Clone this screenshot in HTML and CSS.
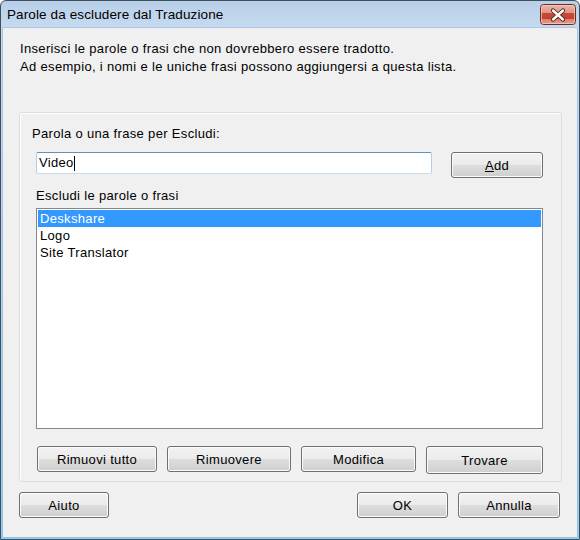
FILE: index.html
```html
<!DOCTYPE html>
<html>
<head>
<meta charset="utf-8">
<link rel="stylesheet" href="styles.css">
</head>
<body>
<div class="window">
  <div class="titlebar">
    <div class="title">Parole da escludere dal Traduzione</div>
    <div class="close">
      <svg width="36" height="21" viewBox="0 0 36 21">
        <defs>
          <linearGradient id="cg" x1="0" y1="0" x2="0" y2="1">
            <stop offset="0" stop-color="#ecb8ac"/>
            <stop offset="0.42" stop-color="#dc9483"/>
            <stop offset="0.45" stop-color="#c84a34"/>
            <stop offset="0.7" stop-color="#c5432e"/>
            <stop offset="0.75" stop-color="#d9826f"/>
            <stop offset="1" stop-color="#e6a393"/>
          </linearGradient>
        </defs>
        <rect x="0.5" y="0.5" width="35" height="20" rx="3" fill="url(#cg)" stroke="#6e2b22"/>
        <rect x="1.5" y="1.5" width="33" height="18" rx="2" fill="none" stroke="#f6d0c6" stroke-opacity="0.7"/>
        <path d="M13 6.5 L23 15.5 M23 6.5 L13 15.5" stroke="#4a231c" stroke-width="4.2" stroke-linecap="round"/>
        <path d="M13 6.5 L23 15.5 M23 6.5 L13 15.5" stroke="#ffffff" stroke-width="2.4" stroke-linecap="round"/>
      </svg>
    </div>
  </div>
  <div class="client">
    <div class="intro">
      <div>Inserisci le parole o frasi che non dovrebbero essere tradotto.</div>
      <div>Ad esempio, i nomi e le uniche frasi possono aggiungersi a questa lista.</div>
    </div>
    <div class="group">
      <div class="label first">Parola o una frase per Escludi:</div>
      <div class="entry-row">
        <div class="textbox">Video<span class="caret"></span></div>
        <div class="btn add"><span class="ul">A</span>dd</div>
      </div>
      <div class="label second">Escludi le parole o frasi</div>
      <div class="listbox">
        <div class="item selected">Deskshare</div>
        <div class="item">Logo</div>
        <div class="item">Site Translator</div>
      </div>
      <div class="btn-row">
        <div class="btn w-rt">Rimuovi tutto</div>
        <div class="btn w-rm">Rimuovere</div>
        <div class="btn w-mo">Modifica</div>
        <div class="btn w-tr">Trovare</div>
      </div>
    </div>
    <div class="footer">
      <div class="btn w-aiuto">Aiuto</div>
      <div class="spacer"></div>
      <div class="btn w-ok">OK</div>
      <div class="btn w-ann">Annulla</div>
    </div>
  </div>
</div>
</body>
</html>
```

FILE: styles.css
```css
html, body {
  margin: 0;
  padding: 0;
  background: #ffffff;
}

body {
  font-family: "Liberation Sans", Arial, sans-serif;
  font-size: 13px;
  letter-spacing: 0.33px;
  color: #000;
}

.window {
  width: 580px;
  height: 540px;
  box-sizing: border-box;
  border: 1px solid #3f4f60;
  border-radius: 6px 6px 0 0;
  padding: 0 2px 2px 2px;
  display: flex;
  flex-direction: column;
  background: linear-gradient(to bottom, #b8cfe8 0px, #c6dbf0 27px, #b9d6ef 40%, #8fd0f0 100%);
}

.titlebar {
  height: 27px;
  display: flex;
  align-items: flex-start;
}

.title {
  padding-left: 4px;
  padding-top: 6px;
  font-size: 13.5px;
  letter-spacing: 0.12px;
  line-height: 16px;
  color: #000;
  flex: 1;
}

.close {
  margin-top: 3px;
  margin-right: 1px;
  height: 21px;
}

.close svg {
  display: block;
}

.client {
  flex: 1;
  background: #f0f0f0;
  display: flex;
  flex-direction: column;
  box-shadow: 0 0 0 0.5px #8fb4d6;
}

.intro {
  margin: 12px 0 0 17px;
  line-height: 18px;
}

.group {
  margin: 36px 0 0 16px;
  width: 543px;
  height: 370px;
  box-sizing: border-box;
  border: 1px solid #d5dfe5;
  border-radius: 3px;
  box-shadow: inset 1px 1px 0 #ffffff;
  padding: 0 0 0 16px;
  display: flex;
  flex-direction: column;
}

.label {
  line-height: 16px;
  height: 16px;
}

.label.first {
  margin: 13px 0 0 -4px;
}

.label.second {
  margin: 10px 0 0 0;
}

.entry-row {
  margin-top: 10px;
  display: flex;
  align-items: flex-start;
  gap: 19px;
}

.textbox {
  width: 396px;
  height: 22px;
  box-sizing: border-box;
  background: #fff;
  border: 1px solid;
  border-color: #5f93bd #b5cfe7 #c8dcee #b5cfe7;
  border-radius: 2px;
  padding: 0 0 0 2px;
  line-height: 20px;
  display: flex;
  align-items: center;
}

.caret {
  display: inline-block;
  width: 1px;
  height: 15px;
  background: #000;
  margin-left: 0px;
}

.btn {
  height: 26px;
  box-sizing: border-box;
  border: 1px solid #707070;
  border-radius: 3px;
  background: linear-gradient(to bottom, #f2f2f2 0%, #ebebeb 48%, #dddddd 52%, #cfcfcf 100%);
  box-shadow: inset 0 0 0 1px #fbfbfb;
  display: flex;
  align-items: center;
  justify-content: center;
  padding-top: 2px;
  line-height: 16px;
  color: #000;
}

.add {
  width: 92px;
  height: 26px;
}

.ul {
  text-decoration: underline;
}

.listbox {
  margin-top: 4px;
  width: 507px;
  height: 221px;
  box-sizing: border-box;
  border: 1px solid #828790;
  background: #fff;
  padding: 1px;
}

.item {
  height: 17px;
  line-height: 17px;
  padding-left: 2px;
}

.item.selected {
  background: #3399ff;
  color: #fff;
}

.btn-row {
  margin: 17px 0 0 1px;
  display: flex;
  gap: 10px;
  align-items: flex-start;
}

.w-rt { width: 120px; }
.w-rm { width: 124px; }
.w-mo { width: 115px; }
.w-tr { width: 117px; height: 28px; }

.footer {
  margin: 10px 17px 0 16px;
  display: flex;
  gap: 10px;
}

.spacer {
  flex: 1;
}

.w-aiuto { width: 90px; }
.w-ok { width: 91px; }
.w-ann { width: 102px; }
```
